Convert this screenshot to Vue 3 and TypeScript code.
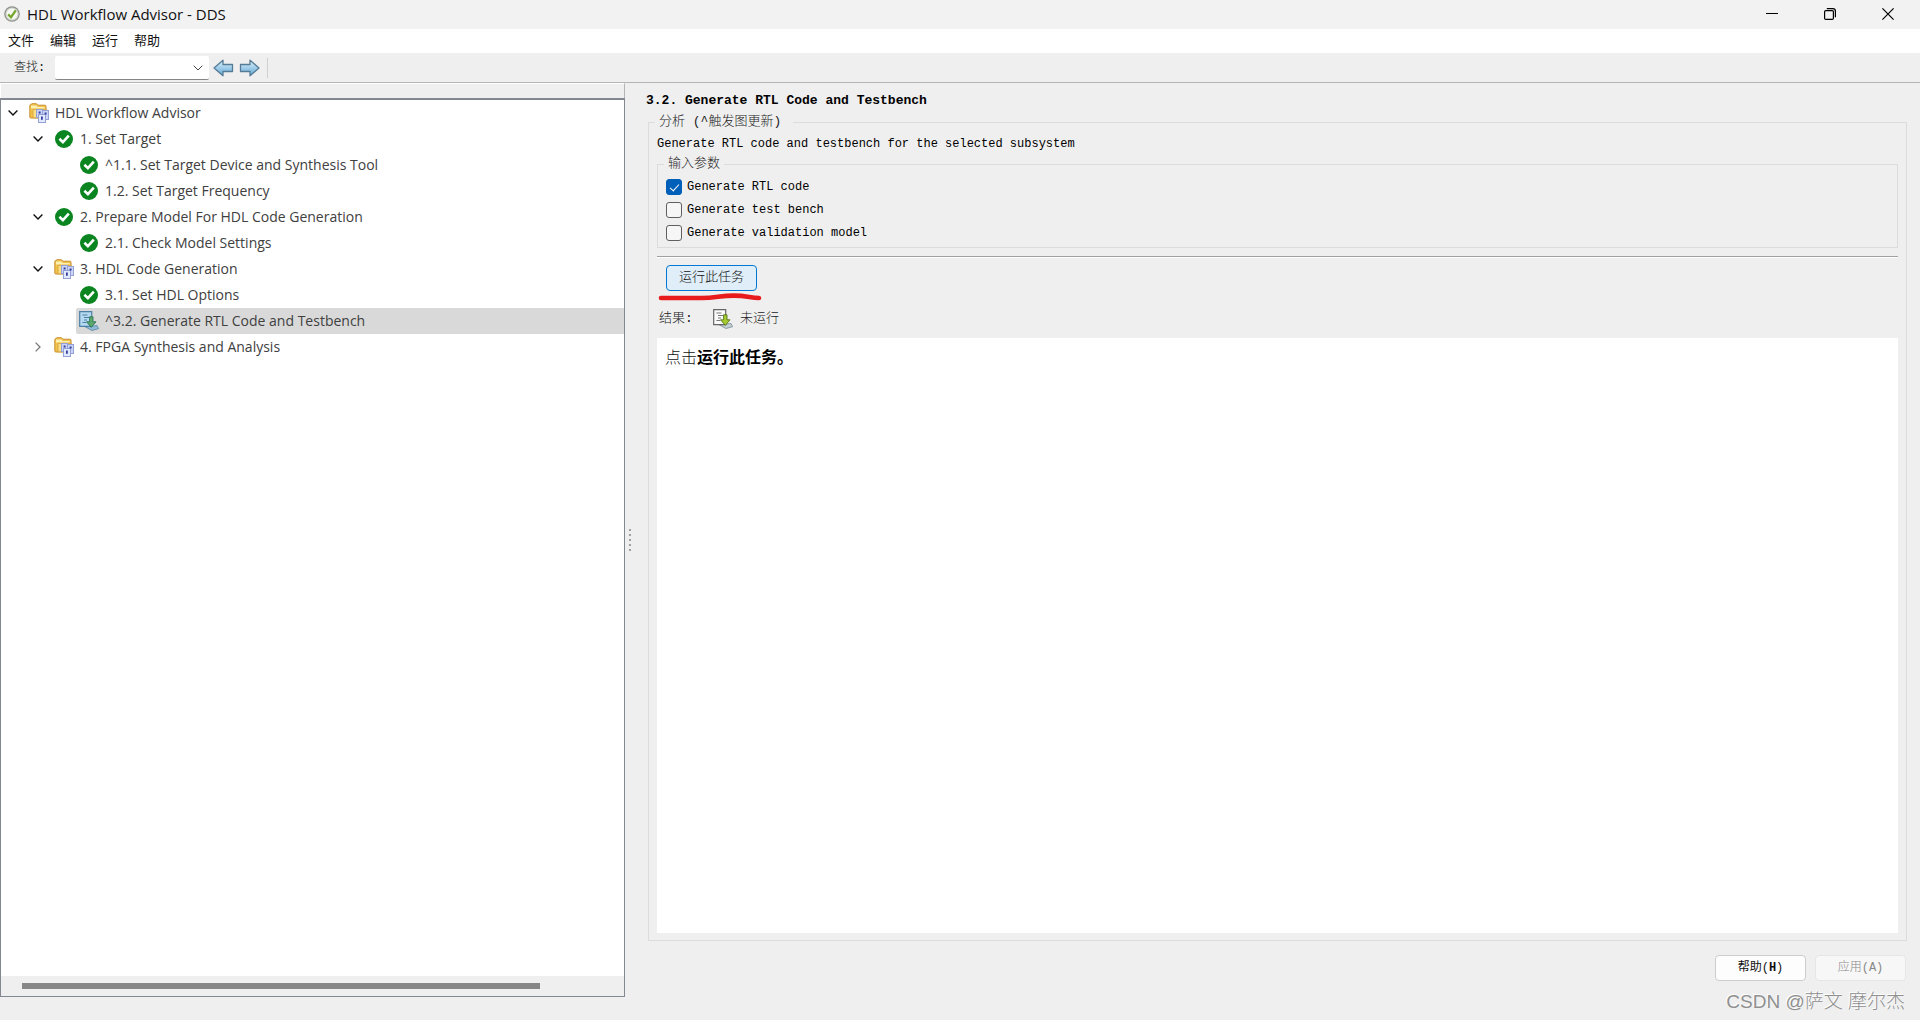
<script setup lang="ts">
import { ref } from 'vue'

type IconKind = 'folder' | 'passed' | 'task'

interface TreeRow {
  label: string
  level: number
  icon: IconKind
  toggle?: 'open' | 'closed'
  selected?: boolean
}

const rows: TreeRow[] = [
  { label: 'HDL Workflow Advisor', level: 0, icon: 'folder', toggle: 'open' },
  { label: '1. Set Target', level: 1, icon: 'passed', toggle: 'open' },
  { label: '^1.1. Set Target Device and Synthesis Tool', level: 2, icon: 'passed' },
  { label: '1.2. Set Target Frequency', level: 2, icon: 'passed' },
  { label: '2. Prepare Model For HDL Code Generation', level: 1, icon: 'passed', toggle: 'open' },
  { label: '2.1. Check Model Settings', level: 2, icon: 'passed' },
  { label: '3. HDL Code Generation', level: 1, icon: 'folder', toggle: 'open' },
  { label: '3.1. Set HDL Options', level: 2, icon: 'passed' },
  { label: '^3.2. Generate RTL Code and Testbench', level: 2, icon: 'task', selected: true },
  { label: '4. FPGA Synthesis and Analysis', level: 1, icon: 'folder', toggle: 'closed' },
]

const menus = ['文件', '编辑', '运行', '帮助']

const options = ref([
  { id: 'rtl', label: 'Generate RTL code', on: true },
  { id: 'bench', label: 'Generate test bench', on: false },
  { id: 'validation', label: 'Generate validation model', on: false },
])
</script>

<template>
  <div class="window">
    <header class="titlebar">
      <svg class="app-icon" width="16" height="16" viewBox="0 0 16 16">
        <circle cx="8" cy="8" r="7.8" fill="#8d918b" />
        <circle cx="8" cy="8" r="6.6" fill="#cfd4ca" />
        <circle cx="8" cy="8" r="5.4" fill="#f6f8f3" />
        <path d="M4.2 8.4 7 11.2 11.8 4.4" fill="none" stroke="#76a52c" stroke-width="2.3" />
      </svg>
      <h1>HDL Workflow Advisor - DDS</h1>
      <div class="window-controls">
        <button type="button" aria-label="最小化">
          <svg width="12" height="12" viewBox="0 0 12 12"><path d="M0 5.5h12" stroke="#000" /></svg>
        </button>
        <button type="button" aria-label="还原">
          <svg width="12" height="12" viewBox="0 0 12 12" fill="none" stroke="#000" stroke-width="1.2">
            <rect x=".6" y="2.6" width="8.8" height="8.8" rx="1.2" />
            <path d="M2.8.6h6a2.6 2.6 0 0 1 2.6 2.6v6" />
          </svg>
        </button>
        <button type="button" aria-label="关闭">
          <svg width="12" height="12" viewBox="0 0 12 12"><path d="M.4.4l11.2 11.2M11.6.4.4 11.6" stroke="#000" stroke-width="1.2" /></svg>
        </button>
      </div>
    </header>

    <nav class="menubar">
      <button v-for="m in menus" :key="m" type="button">{{ m }}</button>
    </nav>

    <div class="toolbar">
      <label for="find">查找:</label>
      <div class="combo">
        <select id="find"><option></option></select>
        <svg width="10" height="6" viewBox="0 0 10 6"><path d="M.7.7 5 5 9.3.7" fill="none" stroke="#444" /></svg>
      </div>
      <button type="button" aria-label="上一个">
        <svg width="21" height="18" viewBox="0 0 21 18">
          <path d="M1 9 10 1.2V5.5h9.5v7H10v4.3z" fill="url(#arrow)" stroke="#567b96" stroke-width="1.3" stroke-linejoin="round" />
          <defs>
            <linearGradient id="arrow" x1="0" y1="0" x2="0" y2="1">
              <stop offset="0" stop-color="#dff1fb" />
              <stop offset="1" stop-color="#5fa8d6" />
            </linearGradient>
          </defs>
        </svg>
      </button>
      <button type="button" aria-label="下一个">
        <svg width="21" height="18" viewBox="0 0 21 18">
          <path d="M20 9 11 1.2V5.5H1.5v7H11v4.3z" fill="url(#arrow)" stroke="#567b96" stroke-width="1.3" stroke-linejoin="round" />
        </svg>
      </button>
      <span class="separator"></span>
    </div>

    <main class="panes">
      <section class="left">
        <div class="strip"></div>
        <div class="tree-box">
          <ul class="tree">
            <li v-for="row in rows" :key="row.label" :class="'level-' + row.level">
              <button v-if="row.toggle" type="button" class="toggle" aria-label="展开或折叠">
                <svg v-if="row.toggle === 'open'" width="10" height="6" viewBox="0 0 10 6">
                  <path d="M.6.6 5 5 9.4.6" fill="none" stroke="#111" stroke-width="1.4" />
                </svg>
                <svg v-else width="6" height="10" viewBox="0 0 6 10">
                  <path d="M.6.6 5 5 .6 9.4" fill="none" stroke="#777" stroke-width="1.3" />
                </svg>
              </button>
              <span v-else class="toggle"></span>
              <span class="node" :class="{ selected: row.selected }">
                <svg v-if="row.icon === 'folder'" width="20" height="20" viewBox="0 0 20 20">
                  <path d="M.8 14V2.6q0-1 1-1L3 .7h4.5l1.3 1.5H16q1 0 1 1V14q0 1-1 1H2q-1.2 0-1.2-1z" fill="#f1c24a" stroke="#c98f33" />
                  <path d="M2 2.4h5.4l1.2 1.5h7.2v1.6H2z" fill="#fdf0b0" />
                  <path d="M4 14.8V6.4h13.6v8.4z" fill="#fbdf83" stroke="#d3a040" stroke-width=".8" />
                  <rect x="7.5" y="6.5" width="6" height="8" fill="#ccd5f6" stroke="#93a1d6" />
                  <rect x="13.5" y="7.5" width="6" height="9" fill="#ccd5f6" stroke="#93a1d6" />
                  <rect x="9.5" y="11.5" width="7" height="8" fill="#e3e9fc" stroke="#93a1d6" />
                  <path d="M9.6 8.6h2v2h-2zM15.6 9.4h2v2h-2zM12 13.6h1.8v3.2H12z" fill="#333f9e" />
                </svg>
                <svg v-else-if="row.icon === 'passed'" width="20" height="20" viewBox="0 0 20 20">
                  <circle cx="10" cy="10" r="9" fill="#0a8520" />
                  <path d="M5.4 9.8 8.9 13.2 14.8 6.6" fill="none" stroke="#fff" stroke-width="2.6" />
                </svg>
                <svg v-else width="20" height="20" viewBox="0 0 20 20">
                  <path d="M6.5 16 18 14.5l1.6 3.2-6.6 1.8z" fill="#8fb9d4" stroke="#5a8aab" stroke-width=".8" />
                  <path d="M.7.7h12v14.6h-12z" fill="#b5d9f0" stroke="#4c80a4" stroke-width="1.2" />
                  <path d="M3.4 4h5M5 6.5h5M5 9h3M3.4 11.5h4" stroke="#4c80a4" stroke-width="1.1" />
                  <path d="M10.6 5.8h3.4v5h3l-4.7 5.6-4.7-5.6h3z" fill="#5ba86c" stroke="#2f735a" stroke-width=".9" />
                </svg>
                {{ row.label }}
              </span>
            </li>
          </ul>
          <div class="scrollbar"><div class="thumb"></div></div>
        </div>
      </section>

      <div class="splitter"><i v-for="n in 5" :key="n"></i></div>

      <section class="right">
        <h2>3.2. Generate RTL Code and Testbench</h2>
        <fieldset class="analysis">
          <legend>分析 (^触发图更新)</legend>
          <p class="description">Generate RTL code and testbench for the selected subsystem</p>
          <fieldset class="params">
            <legend>输入参数</legend>
            <div v-for="o in options" :key="o.id" class="option">
              <input :id="o.id" v-model="o.on" type="checkbox" />
              <label :for="o.id">{{ o.label }}</label>
            </div>
          </fieldset>
          <hr />
          <div class="run">
            <button type="button" class="push primary">运行此任务</button>
            <svg class="marker" width="104" height="10" viewBox="0 0 104 10">
              <path d="M3 6H44C58 6 62 3.6 76 3.6 88 3.6 92 5.6 101 6" fill="none" stroke="#e81c1c" stroke-width="4.6" stroke-linecap="round" />
            </svg>
          </div>
          <div class="result">
            <span class="result-label">结果:</span>
            <svg width="20" height="20" viewBox="0 0 20 20">
              <path d="M6.5 16 18 14.5l1.6 3.2-6.6 1.8z" fill="#c3d0d6" stroke="#7b8a92" stroke-width=".8" />
              <path d="M.7.7h12v15h-12z" fill="#fbfbfb" stroke="#666" stroke-width="1.2" />
              <path d="M3.4 4h5M5 6.5h5M5 9h3M3.4 11.5h4" stroke="#777" stroke-width="1.1" />
              <path d="M10.6 5.8h3.4v5h3l-4.7 5.6-4.7-5.6h3z" fill="#a5cc2c" stroke="#55751a" stroke-width=".9" />
            </svg>
            <span>未运行</span>
          </div>
          <div class="output">点击<strong>运行此任务。</strong></div>
        </fieldset>
        <footer>
          <button type="button" class="push">帮助(<b>H</b>)</button>
          <button type="button" class="push" disabled>应用(A)</button>
        </footer>
      </section>
    </main>
    <div class="watermark">CSDN @萨文 摩尔杰</div>
  </div>
</template>

<style>
body {
  margin: 0;
}
</style>

<style scoped>
* {
  box-sizing: border-box;
}

.window {
  position: relative;
  display: flex;
  flex-direction: column;
  min-height: 100vh;
  background: #efefef;
  color: #111;
  font: 12px/20px "Liberation Mono", "Noto Sans CJK SC", monospace;
}

button {
  padding: 0;
  border: 0;
  background: none;
  color: inherit;
  font: inherit;
}

svg {
  display: block;
  flex: none;
}

.titlebar {
  display: flex;
  align-items: center;
  height: 29px;
  padding: 0 3px 2px 4px;
  gap: 7px;
  background: #f2f2f2;
}

h1 {
  margin: 0;
  flex: 1;
  font: 400 15px/20px "Open Sans", sans-serif;
}

.window-controls {
  display: flex;
}

.window-controls button {
  display: flex;
  justify-content: center;
  width: 58px;
}

.menubar {
  display: flex;
  align-items: center;
  gap: 16px;
  height: 25px;
  padding: 0 8px 2px;
  border-bottom: 1px solid #f0f0f0;
  background: #fff;
  font: 13px/20px "Noto Sans CJK SC", sans-serif;
}

.toolbar {
  display: flex;
  align-items: center;
  height: 29px;
  padding-left: 14px;
  border-bottom: 1px solid #b4b4b4;
}

.toolbar label {
  width: 41px;
  color: #222;
  font-weight: 300;
}

.toolbar button {
  margin-right: 5px;
}

.combo {
  display: flex;
  align-items: center;
  width: 154px;
  height: 24px;
  margin-right: 4px;
  padding-right: 6px;
  border-bottom: 1px solid #868686;
  border-radius: 2px;
  background: #fff;
}

.combo select {
  flex: 1;
  height: 22px;
  border: 0;
  background: none;
  appearance: none;
}

.separator {
  width: 1px;
  height: 20px;
  margin-left: 2px;
  background: #d0d0d0;
}

.panes {
  display: flex;
  flex: 1;
}

.left {
  display: flex;
  flex: 0 0 625px;
  flex-direction: column;
  padding-bottom: 23px;
}

.strip {
  height: 15px;
  border-top: 1px solid #fff;
  border-left: 1px solid #fff;
  border-right: 1px solid #b4b4b4;
}

.tree-box {
  display: flex;
  flex: 1;
  flex-direction: column;
  border: 1px solid #828790;
  border-top-width: 2px;
  background: #fff;
}

.tree {
  flex: 1;
  margin: 0;
  padding: 0;
  list-style: none;
  color: #404040;
  font: 14px/26px "Open Sans", sans-serif;
}

.tree li {
  display: flex;
  height: 26px;
}

.tree .level-1 {
  padding-left: 25px;
}

.tree .level-2 {
  padding-left: 50px;
}

.toggle {
  display: flex;
  align-items: center;
  justify-content: center;
  width: 25px;
  padding-right: 2px;
}

.node {
  display: flex;
  flex: 1;
  align-items: center;
  gap: 6px;
  padding-left: 3px;
  border-radius: 2px 0 0 2px;
  white-space: nowrap;
}

.selected {
  background: #d9d9d9;
}

.scrollbar {
  height: 20px;
  padding: 7px 0 0 21px;
  background: #efefef;
}

.thumb {
  width: 86%;
  height: 6px;
  background: #868686;
}

.splitter {
  display: flex;
  flex: 0 0 10px;
  flex-direction: column;
  align-items: center;
  justify-content: center;
  gap: 3px;
  padding-bottom: 23px;
}

.splitter i {
  width: 2px;
  height: 2px;
  background: #a0a0a0;
}

.right {
  display: flex;
  flex: 1;
  flex-direction: column;
  padding: 8px 13px 0 11px;
}

h2 {
  margin: 0 0 1px;
  color: #000;
  font-size: 13px;
  line-height: 20px;
}

fieldset {
  min-width: 0;
  margin: 0;
  border: 1px solid #dcdcdc;
}

legend {
  padding: 0 4px;
  color: #222;
  font-size: 13px;
  font-weight: 300;
  line-height: 20px;
}

.analysis {
  display: flex;
  flex: 1;
  flex-direction: column;
  margin-left: 2px;
  padding: 2px 8px 7px;
}

.analysis > legend {
  margin-left: -2px;
  padding-right: 12px;
}

.description {
  margin: 0;
  color: #000;
}

.params {
  padding: 1px 8px 3px;
}

.params > legend {
  margin-left: -2px;
}

.option {
  display: flex;
  align-items: center;
  gap: 5px;
  height: 23px;
  color: #000;
}

.option input {
  display: flex;
  justify-content: center;
  width: 16px;
  height: 16px;
  margin: 0;
  border: 1px solid #5f5f5f;
  border-radius: 3px;
  background: #f6f6f6;
  appearance: none;
}

.option input:checked {
  border-color: #005fb8;
  background: #005fb8;
}

.option input:checked::before {
  content: "";
  width: 4px;
  height: 8px;
  margin-top: 2px;
  border: solid #fff;
  border-width: 0 1px 1px 0;
  transform: rotate(42deg);
}

hr {
  width: 100%;
  height: 2px;
  margin: 8px 0 7px;
  border: 0;
  border-top: 1px solid #a0a0a0;
  border-bottom: 1px solid #fff;
}

.run {
  position: relative;
  padding-left: 9px;
}

.push {
  width: 91px;
  height: 26px;
  border: 1px solid #cdcdcd;
  border-radius: 4px;
  background: #fdfdfd;
  font-size: 12px;
  line-height: 20px;
}

.push:disabled {
  border-color: #e6e6e6;
  background: #f7f7f7;
  color: #888;
  font-weight: 300;
}

.push.primary {
  border-color: #0078d4;
  background: #e0eef9;
  font-size: 13px;
  font-weight: 300;
}

.marker {
  position: absolute;
  top: 27px;
  left: 1px;
}

.result {
  display: flex;
  align-items: center;
  gap: 7px;
  height: 32px;
  margin: 12px 0 3px;
  padding-left: 2px;
  color: #222;
  font-size: 13px;
  font-weight: 300;
}

.result-label {
  width: 47px;
}

.output {
  flex: 1;
  padding: 6px 8px;
  background: #fff;
  color: #111;
  font: 300 16px/24px "Noto Sans CJK SC", sans-serif;
}

.output strong {
  color: #000;
  font-weight: 700;
}

footer {
  display: flex;
  justify-content: flex-end;
  gap: 9px;
  padding: 14px 1px 39px 0;
}

.watermark {
  position: absolute;
  right: 15px;
  bottom: 4px;
  color: #8f8f8f;
  font: 300 19px/28px "Liberation Sans", "Noto Sans CJK SC", sans-serif;
  text-shadow: -1px -1px 0 #fff;
}
</style>
